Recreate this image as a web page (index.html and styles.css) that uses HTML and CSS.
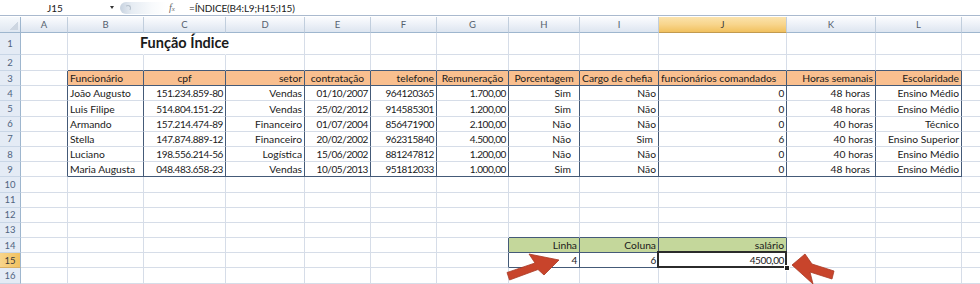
FILE: index.html
```html
<!DOCTYPE html>
<html lang="pt">
<head>
<meta charset="utf-8">
<title>Função Índice</title>
<link rel="stylesheet" href="styles.css">
</head>
<body>
<div class="fbar">
  <div class="namebox">J15</div>
  <span class="dd"></span>
  <div class="expander"><span class="knob"></span></div>
  <i class="fx">f<span>x</span></i>
  <div class="formula">=ÍNDICE(B4:L9;H15;I15)</div>
</div>

<div class="sheet">
  <!-- column headers -->
  <div class="corner"></div>
  <div class="ch">A</div><div class="ch">B</div><div class="ch">C</div><div class="ch">D</div><div class="ch">E</div><div class="ch">F</div><div class="ch">G</div><div class="ch">H</div><div class="ch">I</div><div class="ch sel">J</div><div class="ch">K</div><div class="ch">L</div><div class="ch last"></div>

  <!-- row 1 -->
  <div class="rh">1</div>
  <div class="c"></div><div class="c nr"></div><div class="c nr title">Função Índice</div><div class="c"></div><div class="c"></div><div class="c"></div><div class="c"></div><div class="c"></div><div class="c"></div><div class="c"></div><div class="c"></div><div class="c"></div><div class="c last"></div>

  <!-- row 2 -->
  <div class="rh">2</div>
  <div class="c"></div><div class="c db"></div><div class="c db"></div><div class="c db"></div><div class="c db"></div><div class="c db"></div><div class="c db"></div><div class="c db"></div><div class="c db"></div><div class="c db"></div><div class="c db"></div><div class="c db"></div><div class="c last"></div>

  <!-- row 3 -->
  <div class="rh">3</div>
  <div class="c dr"></div>
  <div class="c hd dr db">Funcionário</div>
  <div class="c hd dr db m">cpf</div>
  <div class="c hd dr db r">setor</div>
  <div class="c hd dr db m">contratação</div>
  <div class="c hd dr db r">telefone</div>
  <div class="c hd dr db m">Remuneração</div>
  <div class="c hd dr db m">Porcentagem</div>
  <div class="c hd dr db">Cargo de chefia</div>
  <div class="c hd dr db">funcionários comandados</div>
  <div class="c hd dr db r">Horas semanais</div>
  <div class="c hd dr db r">Escolaridade</div>
  <div class="c last"></div>

  <!-- row 4 -->
  <div class="rh">4</div>
  <div class="c dr"></div>
  <div class="c dr">João Augusto</div>
  <div class="c dr r num">151.234.859-80</div>
  <div class="c dr r">Vendas</div>
  <div class="c dr r num">01/10/2007</div>
  <div class="c dr r num">964120365</div>
  <div class="c dr r num">1.700,00</div>
  <div class="c dr r ph">Sim</div>
  <div class="c dr r">Não</div>
  <div class="c dr r num">0</div>
  <div class="c dr r pk">48 horas</div>
  <div class="c dr r">Ensino Médio</div>
  <div class="c last"></div>

  <!-- row 5 -->
  <div class="rh">5</div>
  <div class="c dr"></div>
  <div class="c dr">Luis Filipe</div>
  <div class="c dr r num">514.804.151-22</div>
  <div class="c dr r">Vendas</div>
  <div class="c dr r num">25/02/2012</div>
  <div class="c dr r num">914585301</div>
  <div class="c dr r num">1.200,00</div>
  <div class="c dr r ph">Sim</div>
  <div class="c dr r">Não</div>
  <div class="c dr r num">0</div>
  <div class="c dr r pk">48 horas</div>
  <div class="c dr r">Ensino Médio</div>
  <div class="c last"></div>

  <!-- row 6 -->
  <div class="rh">6</div>
  <div class="c dr"></div>
  <div class="c dr">Armando</div>
  <div class="c dr r num">157.214.474-89</div>
  <div class="c dr r">Financeiro</div>
  <div class="c dr r num">01/07/2004</div>
  <div class="c dr r num">856471900</div>
  <div class="c dr r num">2.100,00</div>
  <div class="c dr r ph">Não</div>
  <div class="c dr r">Não</div>
  <div class="c dr r num">0</div>
  <div class="c dr r">40 horas</div>
  <div class="c dr r">Técnico</div>
  <div class="c last"></div>

  <!-- row 7 -->
  <div class="rh">7</div>
  <div class="c dr"></div>
  <div class="c dr">Stella</div>
  <div class="c dr r num">147.874.889-12</div>
  <div class="c dr r">Financeiro</div>
  <div class="c dr r num">20/02/2002</div>
  <div class="c dr r num">962315840</div>
  <div class="c dr r num">4.500,00</div>
  <div class="c dr r ph">Não</div>
  <div class="c dr r pi">Sim</div>
  <div class="c dr r num">6</div>
  <div class="c dr r">40 horas</div>
  <div class="c dr r">Ensino Superior</div>
  <div class="c last"></div>

  <!-- row 8 -->
  <div class="rh">8</div>
  <div class="c dr"></div>
  <div class="c dr">Luciano</div>
  <div class="c dr r num">198.556.214-56</div>
  <div class="c dr r">Logística</div>
  <div class="c dr r num">15/06/2002</div>
  <div class="c dr r num">881247812</div>
  <div class="c dr r num">1.200,00</div>
  <div class="c dr r ph">Não</div>
  <div class="c dr r">Não</div>
  <div class="c dr r num">0</div>
  <div class="c dr r">40 horas</div>
  <div class="c dr r">Ensino Médio</div>
  <div class="c last"></div>

  <!-- row 9 -->
  <div class="rh">9</div>
  <div class="c dr"></div>
  <div class="c dr db">Maria Augusta</div>
  <div class="c dr db r num">048.483.658-23</div>
  <div class="c dr db r">Vendas</div>
  <div class="c dr db r num">10/05/2013</div>
  <div class="c dr db r num">951812033</div>
  <div class="c dr db r num">1.000,00</div>
  <div class="c dr db r ph">Sim</div>
  <div class="c dr db r">Não</div>
  <div class="c dr db r num">0</div>
  <div class="c dr db r pk">48 horas</div>
  <div class="c dr db r">Ensino Médio</div>
  <div class="c last"></div>

  <!-- row 10 -->
  <div class="rh">10</div>
  <div class="c"></div><div class="c"></div><div class="c"></div><div class="c"></div><div class="c"></div><div class="c"></div><div class="c"></div><div class="c"></div><div class="c"></div><div class="c"></div><div class="c"></div><div class="c"></div><div class="c last"></div>

  <!-- row 11 -->
  <div class="rh">11</div>
  <div class="c"></div><div class="c"></div><div class="c"></div><div class="c"></div><div class="c"></div><div class="c"></div><div class="c"></div><div class="c"></div><div class="c"></div><div class="c"></div><div class="c"></div><div class="c"></div><div class="c last"></div>

  <!-- row 12 -->
  <div class="rh">12</div>
  <div class="c"></div><div class="c"></div><div class="c"></div><div class="c"></div><div class="c"></div><div class="c"></div><div class="c"></div><div class="c"></div><div class="c"></div><div class="c"></div><div class="c"></div><div class="c"></div><div class="c last"></div>

  <!-- row 13 -->
  <div class="rh">13</div>
  <div class="c"></div><div class="c"></div><div class="c"></div><div class="c"></div><div class="c"></div><div class="c"></div><div class="c"></div><div class="c db"></div><div class="c db"></div><div class="c db"></div><div class="c"></div><div class="c"></div><div class="c last"></div>

  <!-- row 14 -->
  <div class="rh">14</div>
  <div class="c"></div><div class="c"></div><div class="c"></div><div class="c"></div><div class="c"></div><div class="c"></div>
  <div class="c dr"></div>
  <div class="c gr dr db r">Linha</div>
  <div class="c gr dr db r">Coluna</div>
  <div class="c gr dr db r">salário</div>
  <div class="c"></div><div class="c"></div><div class="c last"></div>

  <!-- row 15 -->
  <div class="rh sel">15</div>
  <div class="c"></div><div class="c"></div><div class="c"></div><div class="c"></div><div class="c"></div><div class="c"></div>
  <div class="c dr"></div>
  <div class="c dr db r num">4</div>
  <div class="c dr db r num">6</div>
  <div class="c dr db r num active">4500,00</div>
  <div class="c"></div><div class="c"></div><div class="c last"></div>

  <!-- row 16 -->
  <div class="rh">16</div>
  <div class="c"></div><div class="c"></div><div class="c"></div><div class="c"></div><div class="c"></div><div class="c"></div><div class="c"></div><div class="c"></div><div class="c"></div><div class="c"></div><div class="c"></div><div class="c"></div><div class="c last"></div>
</div>

<svg class="arrows" width="980" height="284" viewBox="0 0 980 284" aria-hidden="true">
  <polygon class="arrow" points="507,272.5 535,263 529,254 559,260 544,275 538,269.5 509.5,280"/>
  <polygon class="arrow" points="792,265 805,254 812,264 834,271 832,279 810,272 813,284"/>
</svg>
</body>
</html>
```

FILE: styles.css
```css
html, body {
  margin: 0;
  padding: 0;
  background: #ffffff;
}

body {
  width: 980px;
  height: 284px;
  overflow: hidden;
  position: relative;
  font-family: Lato, "Open Sans", sans-serif;
  color: #1a1a1a;
}

/* ---------- formula bar ---------- */
.fbar {
  display: flex;
  align-items: center;
  height: 15px;
  border-bottom: 1px solid #a9b9ce;
  margin-bottom: 1px;
  font-size: 10px;
  color: #1a1a1a;
}

.namebox {
  width: 110px;
  text-align: center;
}

.dd {
  width: 0;
  height: 0;
  border-left: 2.5px solid transparent;
  border-right: 2.5px solid transparent;
  border-top: 3px solid #333;
}

.expander {
  margin-left: 6px;
  width: 46px;
  height: 12px;
  border-radius: 7px 0 0 7px;
  background: linear-gradient(90deg, #c7d2df 0%, #e6ecf3 25%, #f8fafc 70%, #ffffff 100%);
  display: flex;
  align-items: center;
}

.knob {
  margin-left: 5px;
  width: 4px;
  height: 4px;
  border-radius: 50%;
  border: 1px solid #b5c0cc;
  border-left-color: transparent;
  border-bottom-color: transparent;
}

.fx {
  margin-left: 3px;
  width: 10px;
  font-family: "Liberation Serif", serif;
  font-style: italic;
  font-size: 10px;
  color: #6a6a6a;
}

.fx span {
  font-size: 7px;
}

.formula {
  margin-left: 10px;
  letter-spacing: -0.15px;
}

/* ---------- sheet grid ---------- */
.sheet {
  display: grid;
  grid-template-columns: 21px 47px 76px 82px 79px 66px 66px 72px 71px 79px 128px 89px 86px 18px;
  grid-template-rows: 16px 22px 16px repeat(14, 15.2px);
  font-size: 10.3px;
}

.corner {
  box-sizing: border-box;
  border-right: 1px solid #9eb6ce;
  border-bottom: 1px solid #9eb6ce;
  background:
    linear-gradient(135deg, transparent 0 60%, #cdd6e1 60% 100%) right 2px bottom 2px / 10px 10px no-repeat,
    linear-gradient(#f6f9fc, #dfe7f1);
}

.ch {
  box-sizing: border-box;
  display: flex;
  align-items: center;
  justify-content: center;
  border-right: 1px solid #c1cedd;
  border-bottom: 1px solid #9eb6ce;
  background: linear-gradient(#fbfcfe 0%, #eef2f8 45%, #dde5f0 100%);
  color: #555f6e;
  font-size: 9.5px;
}

.ch.sel {
  background: linear-gradient(#fbe3ad 0%, #f8d58c 50%, #f1c15f 100%);
  color: #3a3a3a;
  border-bottom-color: #c29a4f;
}

.ch.last {
  border-right: none;
}

.rh {
  box-sizing: border-box;
  display: flex;
  align-items: center;
  justify-content: center;
  border-right: 1px solid #9eb6ce;
  border-bottom: 1px solid #c9d6e6;
  background: #e4ebf5;
  color: #50647f;
  font-size: 9.5px;
}

.rh.sel {
  background: linear-gradient(90deg, #f8d58c, #f1c15f);
  color: #3a3a3a;
  border-bottom-color: #d9b064;
}

.c {
  box-sizing: border-box;
  display: flex;
  align-items: flex-end;
  justify-content: flex-start;
  padding: 0 2px 1px 2px;
  border-right: 1px solid #d6dde8;
  border-bottom: 1px solid #d6dde8;
  white-space: nowrap;
  line-height: 12px;
}

.c.last {
  border-right: none;
}

.c.nr {
  border-right-color: transparent;
}

.c.title {
  justify-content: center;
  font-weight: 700;
  font-size: 14.5px;
  line-height: 18px;
  padding-bottom: 2px;
}

.c.r {
  justify-content: flex-end;
}

.c.m {
  justify-content: center;
}

.c.num {
  font-size: 10px;
  letter-spacing: -0.4px;
}

.c.ph {
  padding-right: 8px;
}

.c.pi {
  padding-right: 5px;
}

.c.pk {
  padding-right: 5px;
}

.c.dr {
  border-right-color: #445a78;
}

.c.db {
  border-bottom-color: #445a78;
}

.c.hd {
  background: #f9bf8f;
}

.c.gr {
  background: #c4d79b;
}

.c.active {
  position: relative;
}

.c.active::before {
  content: "";
  position: absolute;
  left: -2px;
  top: -2px;
  right: -1px;
  bottom: -1px;
  border: 2px solid #2b2b2b;
}

.c.active::after {
  content: "";
  position: absolute;
  right: -4px;
  bottom: -4px;
  width: 4px;
  height: 4px;
  background: #1f1f1f;
  border: 1px solid #ffffff;
}

/* ---------- annotation arrows ---------- */
.arrows {
  position: absolute;
  left: 0;
  top: 0;
  pointer-events: none;
}

.arrow {
  fill: #c8442b;
  stroke: #a93a25;
  stroke-width: 0.8;
  stroke-linejoin: round;
}
```
